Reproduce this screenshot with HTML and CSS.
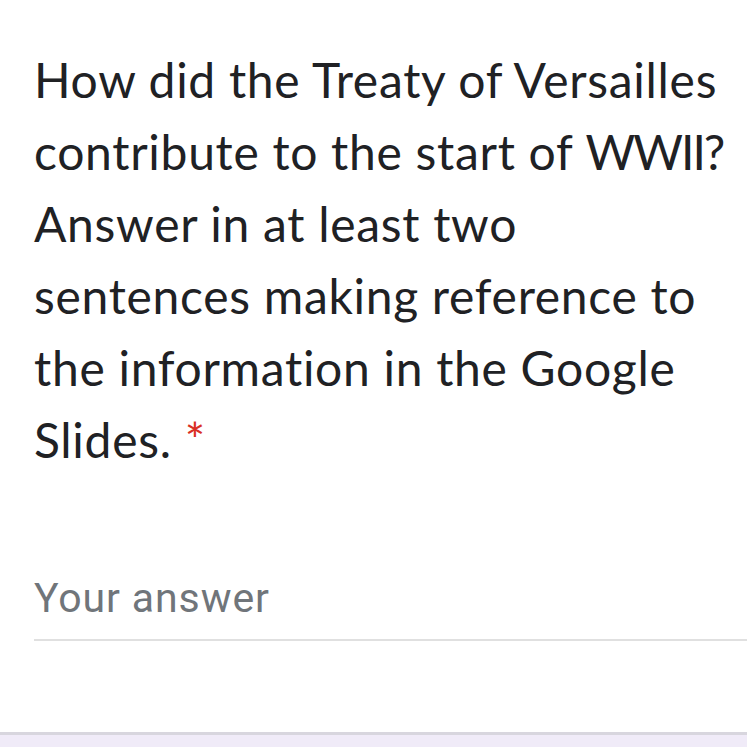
FILE: index.html
```html
<!DOCTYPE html>
<html>
<head>
<meta charset="utf-8">
<link rel="stylesheet" href="styles.css">
</head>
<body>
<div class="page">
  <div class="card">
    <div class="question">How did the Treaty of Versailles<br>contribute to the start of <span class="ww">WWII?</span><br>Answer in at least two<br>sentences making reference to<br>the information in the Google<br>Slides.<span class="req"> *</span></div>
    <div class="answer">
      <div class="placeholder">Your answer</div>
      <div class="underline"></div>
    </div>
  </div>
  <div class="footer"></div>
</div>
</body>
</html>
```

FILE: styles.css
```css
html, body {
  margin: 0;
  padding: 0;
  background: #ffffff;
  overflow: hidden;
}
.page {
  display: flex;
  flex-direction: column;
  height: 747px;
  overflow: hidden;
}
.card {
  flex: 1;
  padding: 44px 0 0 34px;
}
.question {
  font-family: Lato, sans-serif;
  font-size: 48px;
  letter-spacing: 0.7px;
  line-height: 72px;
  color: #202124;
  white-space: nowrap;
}
.ww {
  letter-spacing: -2px;
}
.req {
  color: #d93025;
}
.answer {
  margin-top: 94px;
}
.placeholder {
  font-family: Roboto, sans-serif;
  font-size: 41px;
  letter-spacing: 0.9px;
  line-height: 56px;
  color: #70757a;
}
.underline {
  margin-top: 13px;
  height: 2px;
  background: #e0e0e0;
}
.footer {
  height: 12px;
  border-top: 3px solid #d8d6de;
  background: #f0ebf8;
}
```
